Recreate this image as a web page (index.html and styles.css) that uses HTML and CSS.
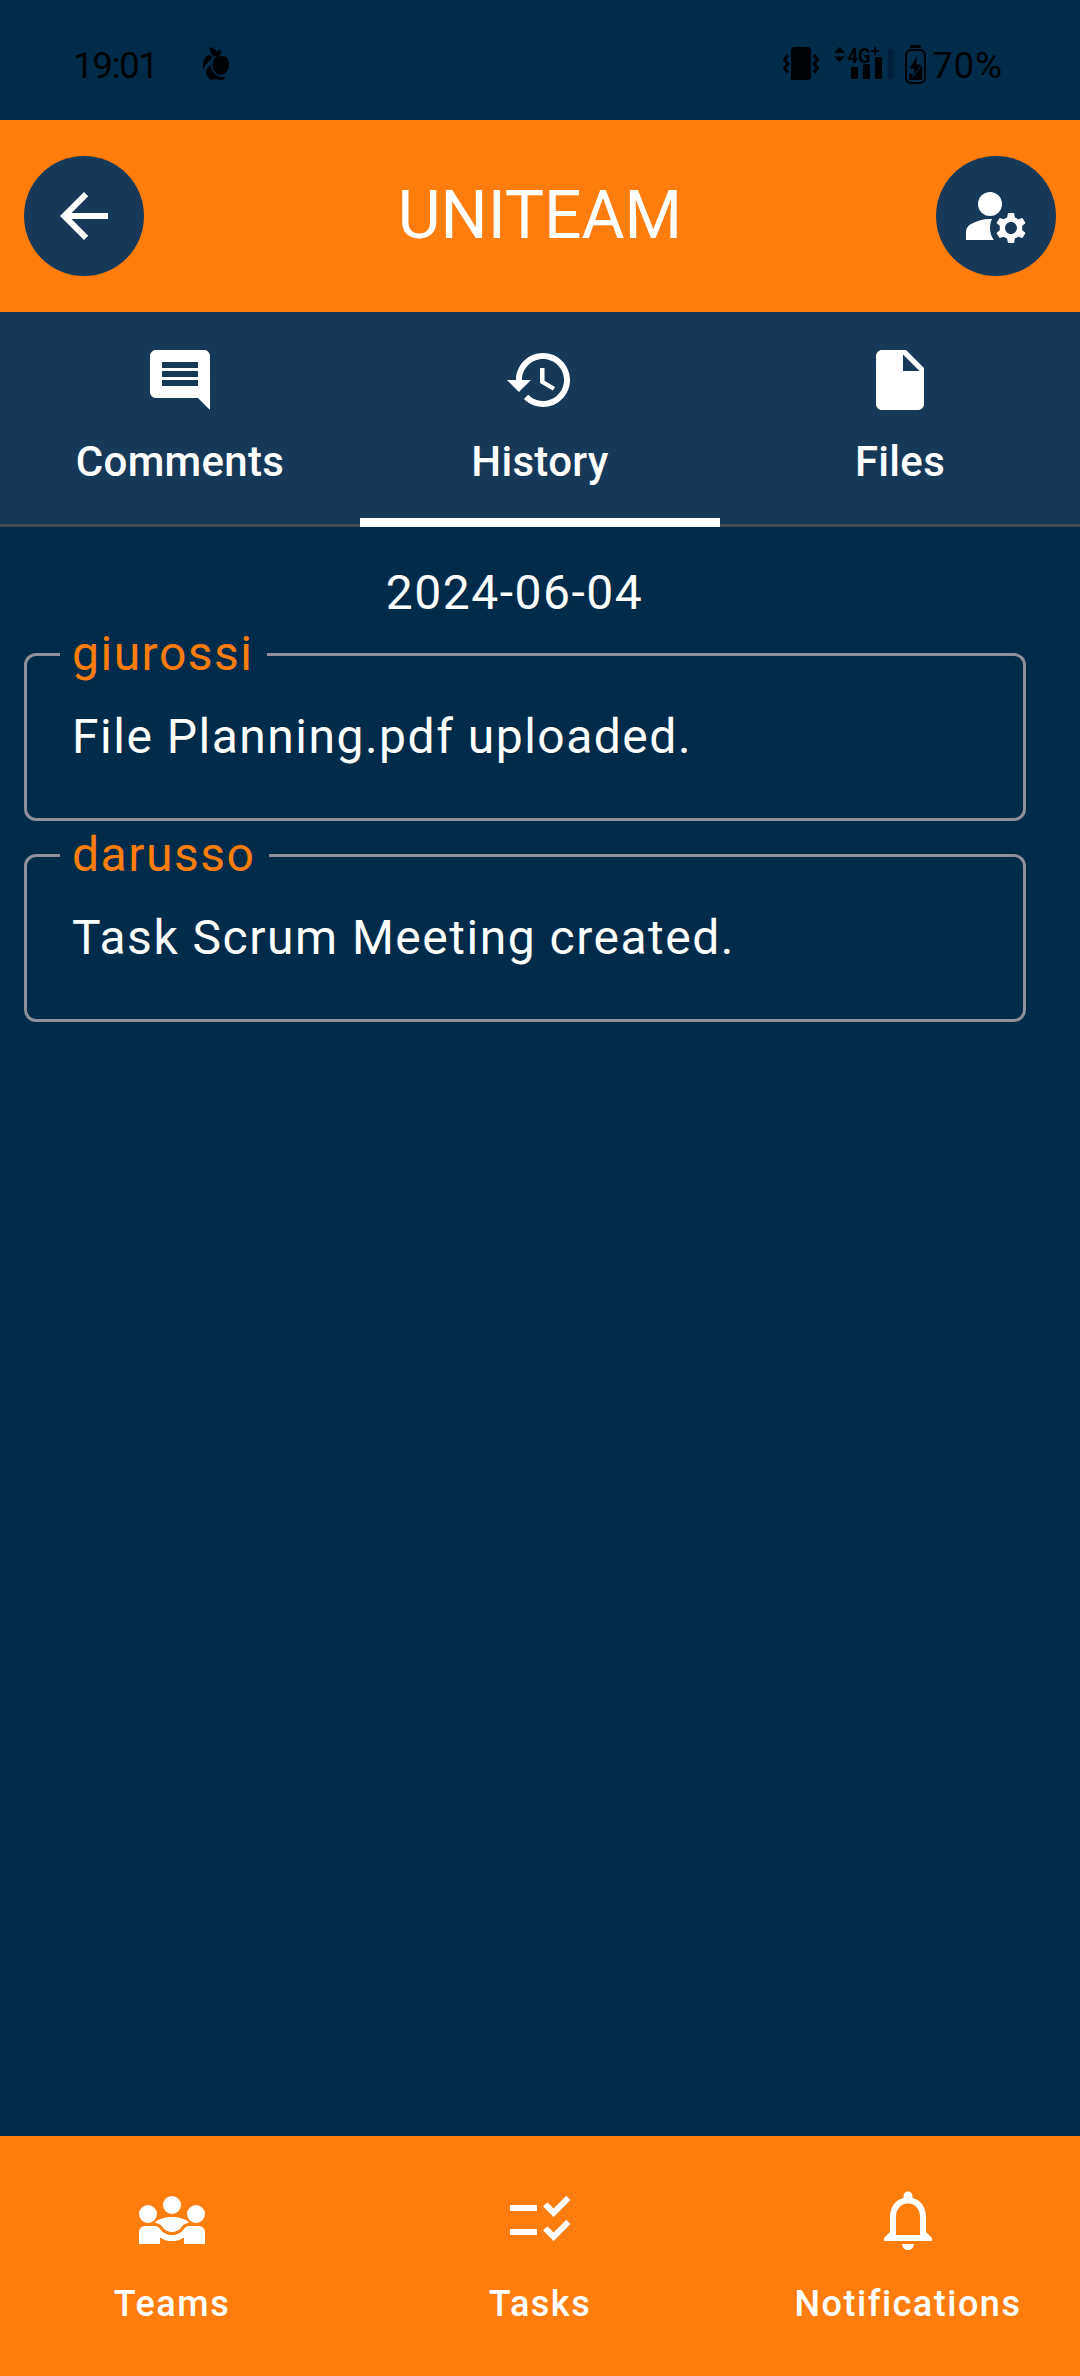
FILE: index.html
```html
<!DOCTYPE html>
<html lang="en">
<head>
<meta charset="utf-8">
<title>UNITEAM</title>
<link rel="stylesheet" href="styles.css">
</head>
<body>
<div class="screen">
  <div class="status">
    <span class="clock">19:01</span>
    <svg class="fruit" viewBox="0 0 26 34">
      <path d="M7 0c4 1 6 3 6.500 5C14.500 3.500 16 3 18 3c.5 4-1.500 6.500-5 6.500C9 9 6 5 7 0z"/>
      <path d="M9.500 9.500C8 8 5.500 7.500 3 9.500 0 12 0 18 0 23.500c1.500-5 4-8 8-10.500 0-1.500.5-2.500 1.500-3.500z"/>
      <path d="M18 9.500c4-2 8 1 8 7.500 0 6-3.500 11-8 11-5 0-8.500-5-8.500-10.500S13 7.500 18 9.500z"/>
      <path d="M7.500 17.500C4.500 20 3 22.500 3 25.500c.5 3.500 2.500 6 5.500 7.500 3-1 5.500-1 8.500 0 2.500 0 4.500-1 5.500-2.500C14 31 8 26 7.500 17.500z"/>
    </svg>
    <span class="spacer"></span>
    <svg class="vibrate" viewBox="0 0 36 34">
      <path d="M8 4a4 4 0 0 1 4-4h13a3 3 0 0 1 3 3v27a3 3 0 0 1-3 3H8z"/>
      <path class="line" d="M5 8 1.500 12.500 5 17 1.500 21 5 25.500M31 8l3.500 4.500L31 17l3.500 4L31 25.500"/>
    </svg>
    <svg class="signal" viewBox="0 0 61 34">
      <path d="M0 6 5.500 0 11 6zM0 9.500h11L5.500 15z"/>
      <text class="network" x="13.500" y="15.500" textLength="23" lengthAdjust="spacingAndGlyphs">4G</text>
      <path d="M40 0h2v3h3v2h-3v3h-2V5h-3V3h3z"/>
      <rect x="17" y="20" width="7" height="12" rx="1"/>
      <rect x="29" y="17" width="7" height="15" rx="1"/>
      <rect x="41" y="10" width="7" height="22" rx="1"/>
      <rect class="faint" x="54" y="2" width="6" height="30" rx="1"/>
    </svg>
    <svg class="battery" viewBox="0 0 21 39">
      <rect x="5" y="0" width="11" height="3" rx="1"/>
      <rect class="line" x="1" y="5" width="19" height="33" rx="5"/>
      <path d="M4 28q2 1 5 1h2l3-8h3v14H4z"/>
      <path class="bolt" d="M12 10 4 24h5l-1 8 9-13h-5z"/>
    </svg>
    <span class="charge">70%</span>
  </div>

  <header class="header">
    <div class="round">
      <svg class="icon" viewBox="0 0 24 24"><path d="M20 11H7.830l5.590-5.590L12 4l-8 8 8 8 1.410-1.410L7.830 13H20v-2z"/></svg>
    </div>
    <h1 class="title">UNITEAM</h1>
    <div class="round">
      <svg class="icon" viewBox="0 0 24 24"><circle cx="10" cy="8" r="4"/><path d="M10.670,13.020C10.450,13.010,10.230,13,10,13c-2.420,0-4.680,0.670-6.610,1.820C2.510,15.340,2,16.320,2,17.350V20h9.260C10.470,18.870,10,17.490,10,16C10,14.930,10.250,13.930,10.670,13.020z"/><path d="M20.750,16c0-0.220-0.030-0.420-0.060-0.630l1.140-1.010l-1-1.730l-1.450,0.490c-0.320-0.270-0.680-0.480-1.080-0.630L18,11h-2l-0.300,1.490c-0.400,0.150-0.760,0.360-1.080,0.630l-1.450-0.490l-1,1.730l1.140,1.010c-0.030,0.210-0.060,0.410-0.060,0.630s0.030,0.420,0.060,0.630l-1.140,1.010l1,1.730l1.450-0.490c0.320,0.270,0.680,0.480,1.080,0.630L16,21h2l0.300-1.490c0.400-0.150,0.760-0.360,1.080-0.630l1.450,0.490l1-1.730l-1.140-1.010C20.720,16.420,20.750,16.220,20.750,16zM17,18c-1.100,0-2-0.900-2-2s0.900-2,2-2s2,0.900,2,2S18.100,18,17,18z"/></svg>
    </div>
  </header>

  <nav class="tabs">
    <div class="tab">
      <svg class="icon" viewBox="0 0 24 24"><path d="M21.990 4c0-1.100-.89-2-1.990-2H4c-1.100 0-2 .9-2 2v12c0 1.100.9 2 2 2h14l4 4-.01-18zM18 14H6v-2h12v2zm0-3H6V9h12v2zm0-3H6V6h12v2z"/></svg>
      <span>Comments</span>
    </div>
    <div class="tab active">
      <svg class="icon" viewBox="0 0 24 24"><path d="M13 3c-4.970 0-9 4.030-9 9H1l3.890 3.890.07.14L9 12H6c0-3.870 3.130-7 7-7s7 3.130 7 7-3.130 7-7 7c-1.930 0-3.680-.79-4.940-2.060l-1.420 1.420C8.270 19.990 10.510 21 13 21c4.970 0 9-4.030 9-9s-4.030-9-9-9zm-1 5v5l4.280 2.540.72-1.210-3.500-2.080V8H12z"/></svg>
      <span>History</span>
    </div>
    <div class="tab">
      <svg class="icon" viewBox="0 0 24 24"><path d="M6 2c-1.100 0-1.990.9-1.990 2L4 20c0 1.100.89 2 1.990 2H18c1.100 0 2-.9 2-2V8l-6-6H6zm7 7V3.500L18.500 9H13z"/></svg>
      <span>Files</span>
    </div>
  </nav>

  <main class="history">
    <p class="date">2024-06-04</p>
    <section class="card">
      <span class="user">giurossi</span>
      <p class="event">File Planning.pdf uploaded.</p>
    </section>
    <section class="card">
      <span class="user">darusso</span>
      <p class="event">Task Scrum Meeting created.</p>
    </section>
  </main>

  <nav class="bottom">
    <div class="item">
      <svg class="icon" viewBox="0 0 24 24"><circle cx="4" cy="10" r="3"/><circle cx="12" cy="7" r="3"/><circle cx="20" cy="10" r="3"/><path d="M6.300 12.900C7.200 11.600 10 11 12 11s4.800.6 5.700 1.900c-1 .1-1.900.6-2.500 1.400C14.400 15.400 13.200 16 12 16s-2.400-.6-3.200-1.700c-.6-.8-1.500-1.300-2.500-1.400z"/><path d="M8 20H1v-4c0-1.100.9-2 2-2h3.270c.7 0 1.300.3 1.700.9C9 16.400 10.500 17 12 17s3-.6 4.030-2.100c.4-.6 1-.9 1.700-.9H21a2 2 0 0 1 2 2v4h-7v-2.200C14.900 18.600 13.500 19 12 19s-2.900-.4-4-1.200z"/></svg>
      <span>Teams</span>
    </div>
    <div class="item">
      <svg class="icon" viewBox="0 0 24 24"><path d="M11 7H2v2h9V7zm0 8H2v2h9v-2zM16.540 11 13 7.460l1.410-1.410 2.120 2.120 4.240-4.240 1.410 1.410L16.540 11zM16.540 19 13 15.460l1.410-1.410 2.120 2.120 4.240-4.240 1.410 1.410L16.540 19z"/></svg>
      <span>Tasks</span>
    </div>
    <div class="item">
      <svg class="icon" viewBox="0 0 24 24"><path d="M12 22c1.100 0 2-.9 2-2h-4c0 1.100.9 2 2 2zm6-6v-5c0-3.070-1.630-5.640-4.500-6.320V4c0-.83-.67-1.500-1.500-1.500s-1.500.67-1.500 1.500v.68C7.640 5.360 6 7.920 6 11v5l-2 2v1h16v-1l-2-2zm-2 1H8v-6c0-2.480 1.510-4.500 4-4.500s4 2.020 4 4.500v6z"/></svg>
      <span>Notifications</span>
    </div>
  </nav>
</div>
</body>
</html>
```
FILE: styles.css
```css
* {
  box-sizing: border-box;
  margin: 0;
}

body {
  background: #002b4a;
  color: #fff;
  font-family: Roboto, "Liberation Sans", sans-serif;
}

.screen {
  display: flex;
  flex-direction: column;
  width: 1080px;
  height: 2376px;
}

.icon {
  width: 72px;
  height: 72px;
  fill: currentColor;
}

/* System status bar */
.status {
  display: flex;
  align-items: flex-start;
  height: 120px;
  padding: 45px 74px 0 73px;
  color: #000306;
  fill: #000306;
  font-size: 37px;
  line-height: 42px;
}

.clock {
  width: 130px;
  letter-spacing: -1.5px;
}

.spacer {
  flex: 1;
}

.fruit {
  width: 26px;
  height: 34px;
  margin-top: 2px;
}

.vibrate {
  width: 36px;
  height: 34px;
  margin: 2px 15px 0 0;
}

.signal {
  width: 61px;
  height: 34px;
  margin: 2px 10px 0 0;
  overflow: visible;
}

.network {
  font-size: 21px;
  font-weight: 700;
}

.faint {
  fill: #00223e;
}

.battery {
  width: 21px;
  height: 39px;
  margin-right: 6px;
}

.line {
  fill: none;
  stroke: #000306;
  stroke-width: 2px;
}

.vibrate .line {
  stroke-width: 3px;
}

.bolt {
  stroke: #002b4a;
  stroke-width: 1px;
}

.charge {
  width: 74px;
  letter-spacing: 0.7px;
}

/* App header */
.header {
  display: flex;
  align-items: center;
  justify-content: space-between;
  height: 192px;
  padding: 0 24px;
  background: #ff7d0d;
}

.round {
  display: flex;
  align-items: center;
  justify-content: center;
  width: 120px;
  height: 120px;
  border-radius: 50%;
  background: #16395a;
}

.title {
  font-size: 66px;
  font-weight: 400;
  line-height: 84px;
}

/* Tabs */
.tabs {
  display: grid;
  grid-template-columns: repeat(3, 1fr);
  height: 215px;
  background: #16395a;
}

.tab {
  display: flex;
  flex-direction: column;
  align-items: center;
  gap: 16px;
  padding-top: 32px;
  border-bottom: 3px solid #454a57;
  font-size: 42px;
  font-weight: 500;
  line-height: 60px;
  letter-spacing: 0.3px;
}

.tab.active {
  border-bottom: 9px solid #fff;
}

/* History list */
.history {
  display: flex;
  flex: 1;
  flex-direction: column;
  width: 1026px;
  padding-top: 30px;
  font-size: 48px;
  line-height: 72px;
  letter-spacing: 1.5px;
}

.date {
  margin-bottom: 24px;
  padding-left: 3px;
  text-align: center;
}

.card {
  position: relative;
  height: 168px;
  margin: 0 0 33px 24px;
  padding: 45px;
  border: 3px solid #8e909c;
  border-radius: 12px;
}

.user {
  position: absolute;
  top: -30px;
  left: 33px;
  padding: 0 13.5px 0 12px;
  background: #002b4a;
  color: #ff7d0d;
  line-height: 56px;
}

/* Bottom navigation */
.bottom {
  display: grid;
  grid-template-columns: repeat(3, 1fr);
  gap: 24px;
  height: 240px;
  background: #ff7d0d;
}

.item {
  display: flex;
  flex-direction: column;
  align-items: center;
  gap: 24px;
  padding-top: 48px;
  font-size: 36px;
  font-weight: 500;
  line-height: 48px;
  letter-spacing: 1.5px;
}
```
